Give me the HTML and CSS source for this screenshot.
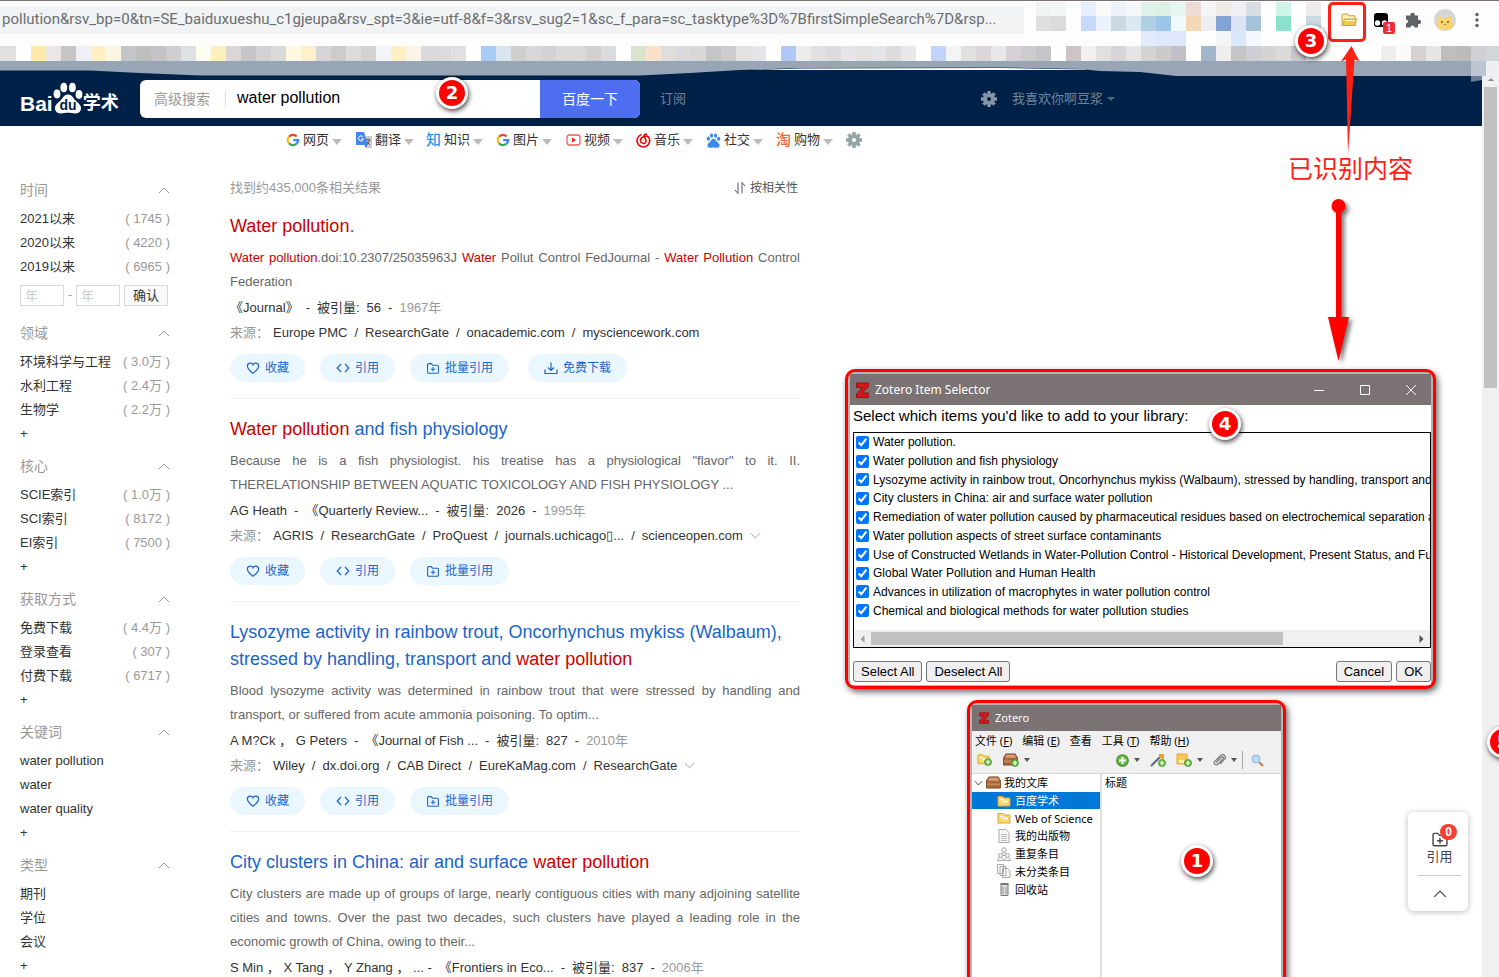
FILE: index.html
```html
<!DOCTYPE html>
<html lang="zh-CN">
<head>
<meta charset="utf-8">
<title>water pollution - 百度学术</title>
<link rel="stylesheet" href="styles.css">
</head>
<body>
<svg class="defs" aria-hidden="true">
  <defs>
    <symbol id="gear" viewBox="0 0 16 16"><circle cx="8" cy="8" r="4" fill="none" stroke="currentColor" stroke-width="4"/><path d="M8 0v4M8 12v4M0 8h4M12 8h4M2.4 2.4l2.8 2.8M10.8 10.8l2.8 2.8M13.6 2.4l-2.8 2.8M5.2 10.8l-2.8 2.8" stroke="currentColor" stroke-width="3.4" fill="none"/></symbol>
    <symbol id="up" viewBox="0 0 12 7"><path d="M1 6l5-5 5 5" fill="none" stroke="currentColor"/></symbol>
    <symbol id="down" viewBox="0 0 12 7"><path d="M1 1l5 5 5-5" fill="none" stroke="currentColor"/></symbol>
    <symbol id="heart" viewBox="0 0 14 14"><path d="M7 12.2C4 9.9 1.4 7.6 1.4 4.9a2.9 2.9 0 0 1 5.6-1 2.9 2.9 0 0 1 5.6 1C12.600 7.600 10 9.900 7 12.200z" fill="none" stroke="currentColor" stroke-width="1.200"/></symbol>
    <symbol id="code" viewBox="0 0 14 14"><path d="M5 3L1.200 7 5 11M9 3l3.800 4L9 11" fill="none" stroke="currentColor" stroke-width="1.200"/></symbol>
    <symbol id="folderplus" viewBox="0 0 14 14"><path d="M2.600 2.600h2.600l1.400 1.600h4.800a1 1 0 0 1 1 1v6a1 1 0 0 1-1 1H2.600a1 1 0 0 1-1-1V3.600a1 1 0 0 1 1-1zM7 6v4.600M4.700 8.300h4.600" fill="none" stroke="currentColor" stroke-width="1.100"/></symbol>
    <symbol id="download" viewBox="0 0 14 14"><path d="M7 1.500v7.500M4 6.500l3 3 3-3M1 8.500v4h12v-4" fill="none" stroke="currentColor" stroke-width="1.200"/></symbol>
    <symbol id="google" viewBox="0 0 14 14"><g fill="none" stroke-width="2.200"><path d="M3 3.700A5 5 0 0 1 10.600 3.400" stroke="#ea4335"/><path d="M3 10.300a5 5 0 0 1 0-6.600" stroke="#fbbc05"/><path d="M10.300 10.800A5 5 0 0 1 3 10.300" stroke="#34a853"/><path d="M7.200 7.200h5a5 5 0 0 1-1.900 3.600" stroke="#4285f4"/></g></symbol>
    <symbol id="paw" viewBox="0 0 30 32"><ellipse cx="4" cy="12" rx="3.400" ry="4.400"/><ellipse cx="10.800" cy="5.500" rx="3.400" ry="4.700"/><ellipse cx="19.400" cy="5.500" rx="3.400" ry="4.700"/><ellipse cx="26" cy="12.500" rx="3.400" ry="4.400"/><path d="M15 12.500c-4 0-5 3.500-7.500 6S1.500 23 2 27c.5 3 3 4.500 6 4.500 2.500 0 4-.7 7-.7s4.500.7 7 .7c3 0 5.500-1.500 6-4.500.500-4-3-6-5.500-8.500s-3.500-6-7.500-6z"/></symbol>
    <symbol id="folder" viewBox="0 0 16 14"><path d="M1 12.500V2.200L2 1h4.500l1 1.800H14v9.700z" fill="#fff3c0" stroke="#c89a2e"/><path d="M1.500 12.500L3.500 6h12l-1.300 6.500z" fill="#f0c84a" stroke="#d3a437"/><path d="M4 7.500h10" stroke="#fff6cf"/></symbol>
    <symbol id="folder2" viewBox="0 0 14 12"><path d="M1 11V1.500h5l1 1.500h6v8z" fill="#f9d873" stroke="#dba63a"/><path d="M3 4.500h4M6 6.500h5" stroke="#fff" stroke-width="1.500"/></symbol>
    <symbol id="box" viewBox="0 0 16 14"><path d="M3 1h10l2.500 4v8h-15V5z" fill="#a9663a" stroke="#7e4422"/><path d="M3.500 2h9l1.500 3H2z" fill="#d6a077"/><path d="M1 9h14" stroke="#c98957" stroke-width="2"/></symbol>
    <symbol id="plus" viewBox="0 0 10 10"><circle cx="5" cy="5" r="4.400" fill="#6bbb48" stroke="#4a8f30"/><path d="M5 2.300v5.400M2.300 5h5.400" stroke="#fff" stroke-width="1.500"/></symbol>
    <symbol id="z" viewBox="0 0 13 16"><path d="M.5 1h12v3.500L6.500 11h6v4.500H.5V12l6-6.500h-6z" fill="#d5161b" stroke="#9b1014"/></symbol>
  </defs>
</svg>

<header class="chrome">
  <svg class="mosaic" id="mosaic" aria-hidden="true"></svg>
  <div class="toolbar">
    <div class="url">pollution&amp;rsv_bp=0&amp;tn=SE_baiduxueshu_c1gjeupa&amp;rsv_spt=3&amp;ie=utf-8&amp;f=3&amp;rsv_sug2=1&amp;sc_f_para=sc_tasktype%3D%7BfirstSimpleSearch%7D&amp;rsp...</div>
    <div class="extensions">
      <button aria-label="Zotero Connector"><svg width="16" height="14"><use href="#folder"/></svg></button>
      <button class="monkey" aria-label="Tampermonkey"><svg width="16" height="16" viewBox="0 0 16 16"><rect x="1" y="1" width="14" height="14" rx="3"/><circle cx="4.500" cy="11" r="2.700" fill="#fff"/><circle cx="11.500" cy="11" r="2.700" fill="#fff"/></svg><span>1</span></button>
      <button aria-label="扩展程序"><svg width="16" height="16" viewBox="0 0 16 16" fill="#5f6368"><path d="M1 3.500h4.500a2.200 2.200 0 1 1 4.200 0H13V8a2.200 2.200 0 1 1 0 4v3.500H9.500a2 2 0 1 0-4 0H1v-4a2 2 0 1 0 0-4z"/></svg></button>
      <button aria-label="用户"><svg width="22" height="22" viewBox="0 0 22 22"><circle cx="11" cy="11" r="11" fill="#d6d6d6"/><path d="M4.500 6l3.500 3h6l3.500-3 .5 7c1.500 2 1 4 0 5.500-3 3-11 3-14 0-1-1.500-1.500-3.500 0-5.500z" fill="#fbd667"/><circle cx="8" cy="13" r="1" fill="#754"/><circle cx="14" cy="13" r="1" fill="#754"/><path d="M10 15.500h2" stroke="#a65"/></svg></button>
      <button aria-label="菜单"><svg width="4" height="16" viewBox="0 0 4 16" fill="#5f6368"><circle cx="2" cy="2.500" r="1.700"/><circle cx="2" cy="8" r="1.700"/><circle cx="2" cy="13.500" r="1.700"/></svg></button>
    </div>
  </div>
</header>

<div class="viewport">
  <div class="page">
    <div class="masthead">
      <a class="logo" href="#" aria-label="百度学术"><span class="latin">Bai</span><svg width="30" height="32"><use href="#paw" fill="#fff"/><text x="15" y="28" text-anchor="middle">du</text></svg><span class="han">学术</span></a>
      <form class="search">
        <button type="button" class="advanced">高级搜索</button>
        <input type="text" value="water pollution" aria-label="搜索">
        <button type="button" class="go">百度一下</button>
      </form>
      <a class="subscribe" href="#">订阅</a>
      <a class="user" href="#"><svg width="16" height="16"><use href="#gear"/></svg><span>我喜欢你啊豆浆</span><i class="caret"></i></a>
    </div>

    <nav class="engines">
      <a href="#"><svg width="14" height="14"><use href="#google"/></svg>网页<i class="caret"></i></a>
      <a href="#"><svg width="16" height="16" viewBox="0 0 16 16"><path d="M7 4h9v12H9z" fill="#ccc"/><path d="M9.500 8h5M12 6.500V8M10 13c2-1 3-3 3.500-5M10.500 9.500l3.500 3.500" stroke="#555" fill="none"/><path d="M0 0h8l4 13H0z" fill="#4587e8"/><path d="M9 13h2l-1 3z" fill="#2a56c6"/><path d="M7 4.800A2.500 2.500 0 1 0 7.500 7H5" stroke="#fff" fill="none"/></svg>翻译<i class="caret"></i></a>
      <a href="#"><b class="zhi">知</b>知识<i class="caret"></i></a>
      <a href="#"><svg width="14" height="14"><use href="#google"/></svg>图片<i class="caret"></i></a>
      <a href="#"><svg width="15" height="14" viewBox="0 0 15 14"><rect x="1" y="2" width="13" height="10" rx="2.500" fill="none" stroke="#f25a5a" stroke-width="1.300"/><path d="M6 4.600v4.800L10 7z" fill="#f22"/></svg>视频<i class="caret"></i></a>
      <a href="#"><svg width="15" height="15" viewBox="0 0 15 15"><path d="M5.500 1.600A6.300 6.300 0 1 0 12.500 4C11.300 3 9.500 3 8 3.500 5.500 4.200 4.300 6 4.500 8c.3 2.500 4 3.300 5.200 1.300C10.700 7 9 5.700 8.300 3.500 7.600 1.500 9.500.5 11 1.600" fill="none" stroke="#f00808" stroke-width="1.600"/></svg>音乐<i class="caret"></i></a>
      <a href="#"><svg width="15" height="15"><use href="#paw" fill="#3c8cf0"/></svg>社交<i class="caret"></i></a>
      <a href="#"><b class="tao">淘</b>购物<i class="caret"></i></a>
      <a href="#" class="settings" aria-label="设置"><svg width="16" height="16"><use href="#gear"/></svg></a>
    </nav>

    <main class="columns">
      <aside class="filters">
        <section>
          <h2>时间<svg><use href="#up"/></svg></h2>
          <a href="#">2021以来<span>( 1745 )</span></a>
          <a href="#">2020以来<span>( 4220 )</span></a>
          <a href="#">2019以来<span>( 6965 )</span></a>
          <form class="years"><input type="text" placeholder="年" aria-label="起始年"><span>-</span><input type="text" placeholder="年" aria-label="结束年"><button type="button">确认</button></form>
        </section>
        <section>
          <h2>领域<svg><use href="#up"/></svg></h2>
          <a href="#">环境科学与工程<span>( 3.0万 )</span></a>
          <a href="#">水利工程<span>( 2.4万 )</span></a>
          <a href="#">生物学<span>( 2.2万 )</span></a>
          <a href="#">+</a>
        </section>
        <section>
          <h2>核心<svg><use href="#up"/></svg></h2>
          <a href="#">SCIE索引<span>( 1.0万 )</span></a>
          <a href="#">SCI索引<span>( 8172 )</span></a>
          <a href="#">EI索引<span>( 7500 )</span></a>
          <a href="#">+</a>
        </section>
        <section>
          <h2>获取方式<svg><use href="#up"/></svg></h2>
          <a href="#">免费下载<span>( 4.4万 )</span></a>
          <a href="#">登录查看<span>( 307 )</span></a>
          <a href="#">付费下载<span>( 6717 )</span></a>
          <a href="#">+</a>
        </section>
        <section>
          <h2>关键词<svg><use href="#up"/></svg></h2>
          <a href="#">water pollution</a>
          <a href="#">water</a>
          <a href="#">water quality</a>
          <a href="#">+</a>
        </section>
        <section>
          <h2>类型<svg><use href="#up"/></svg></h2>
          <a href="#">期刊</a>
          <a href="#">学位</a>
          <a href="#">会议</a>
          <a href="#">+</a>
        </section>
      </aside>

      <div class="results">
        <div class="summary"><span>找到约435,000条相关结果</span><button><svg width="12" height="12" viewBox="0 0 12 12"><path d="M4 .5v11L1 8M8 11.500V.5L11 4" fill="none" stroke="currentColor"/></svg>按相关性</button></div>

        <article>
          <h3><a href="#"><em>Water pollution</em>.</a></h3>
          <p class="abstract"><em>Water pollution</em>.doi:10.2307/25035963J <em>Water</em> Pollut Control FedJournal - <em>Water Pollution</em> Control Federation</p>
          <div class="meta"><a href="#">《Journal》</a><span>-</span><span>被引量:</span><a href="#">56</a><span>-</span><time>1967年</time></div>
          <div class="sources"><span>来源：</span><div class="meta"><a href="#">Europe PMC</a><span>/</span><a href="#">ResearchGate</a><span>/</span><a href="#">onacademic.com</a><span>/</span><a href="#">mysciencework.com</a></div></div>
          <div class="actions"><button><svg><use href="#heart"/></svg>收藏</button><button><svg><use href="#code"/></svg>引用</button><button><svg><use href="#folderplus"/></svg>批量引用</button><button class="free"><svg><use href="#download"/></svg>免费下载</button></div>
        </article>

        <article>
          <h3><a href="#"><em>Water pollution</em> and fish physiology</a></h3>
          <p class="abstract">Because he is a fish physiologist. his treatise has a physiological "flavor" to it. II. THERELATIONSHIP BETWEEN AQUATIC TOXICOLOGY AND FISH PHYSIOLOGY ...</p>
          <div class="meta"><a href="#">AG Heath</a><span>-</span><a href="#">《Quarterly Review...</a><span>-</span><span>被引量:</span><a href="#">2026</a><span>-</span><time>1995年</time></div>
          <div class="sources"><span>来源：</span><div class="meta"><a href="#">AGRIS</a><span>/</span><a href="#">ResearchGate</a><span>/</span><a href="#">ProQuest</a><span>/</span><a href="#">journals.uchicago▯...</a><span>/</span><a href="#">scienceopen.com</a><svg><use href="#down"/></svg></div></div>
          <div class="actions"><button><svg><use href="#heart"/></svg>收藏</button><button><svg><use href="#code"/></svg>引用</button><button><svg><use href="#folderplus"/></svg>批量引用</button></div>
        </article>

        <article>
          <h3><a href="#">Lysozyme activity in rainbow trout, Oncorhynchus mykiss (Walbaum), stressed by handling, transport and <em>water pollution</em></a></h3>
          <p class="abstract">Blood lysozyme activity was determined in rainbow trout that were stressed by handling and transport, or suffered from acute ammonia poisoning. To optim...</p>
          <div class="meta"><a href="#">A M?Ck ，&nbsp;G Peters</a><span>-</span><a href="#">《Journal of Fish ...</a><span>-</span><span>被引量:</span><a href="#">827</a><span>-</span><time>2010年</time></div>
          <div class="sources"><span>来源：</span><div class="meta"><a href="#">Wiley</a><span>/</span><a href="#">dx.doi.org</a><span>/</span><a href="#">CAB Direct</a><span>/</span><a href="#">EureKaMag.com</a><span>/</span><a href="#">ResearchGate</a><svg><use href="#down"/></svg></div></div>
          <div class="actions"><button><svg><use href="#heart"/></svg>收藏</button><button><svg><use href="#code"/></svg>引用</button><button><svg><use href="#folderplus"/></svg>批量引用</button></div>
        </article>

        <article>
          <h3><a href="#">City clusters in China: air and surface <em>water pollution</em></a></h3>
          <p class="abstract">City clusters are made up of groups of large, nearly contiguous cities with many adjoining satellite cities and towns. Over the past two decades, such clusters have played a leading role in the economic growth of China, owing to their...</p>
          <div class="meta"><a href="#">S Min ，&nbsp;X Tang ，&nbsp;Y Zhang ，&nbsp;... -</a><a href="#">《Frontiers in Eco...</a><span>-</span><span>被引量:</span><a href="#">837</a><span>-</span><time>2006年</time></div>
        </article>
      </div>
    </main>
  </div>
  <div class="scrollbar"><i></i><b></b></div>
</div>

<svg class="smear" width="1499" height="90" aria-hidden="true">
  <path d="M0 61H1486V76H1176L1140 72 1100 71 1080 69 1000 67.500 800 68 740 70 690 73 640 75.500H200L140 73 90 70.500H0z" fill="#98a5b5"/>
  <path d="M750 70L800 68.500 1000 68 1085 69.500 1086 70z" fill="#fff"/>
  <path d="M1471 46h28v31l-28 5z" fill="#e8eef4" opacity=".45"/>
</svg>

<div class="citebox">
  <button><svg width="20" height="18"><use href="#folderplus"/></svg><span>引用</span><b>0</b></button>
  <button aria-label="返回顶部"><svg width="14" height="8"><use href="#up"/></svg></button>
</div>

<section class="window selector">
  <div class="titlebar"><svg width="13" height="16"><use href="#z"/></svg><span>Zotero Item Selector</span>
    <div class="controls"><button aria-label="最小化"><svg viewBox="0 0 12 12"><path d="M1 6.500h10"/></svg></button><button aria-label="最大化"><svg viewBox="0 0 12 12"><path d="M1.500 1.500h9v9h-9z"/></svg></button><button aria-label="关闭"><svg viewBox="0 0 12 12"><path d="M1 1l10 10M11 1L1 11"/></svg></button></div>
  </div>
  <div class="dialog">
    <p>Select which items you'd like to add to your library:</p>
    <div class="listbox">
      <div class="items">
        <label><input type="checkbox" checked>Water pollution.</label>
        <label><input type="checkbox" checked>Water pollution and fish physiology</label>
        <label><input type="checkbox" checked>Lysozyme activity in rainbow trout, Oncorhynchus mykiss (Walbaum), stressed by handling, transport and</label>
        <label><input type="checkbox" checked>City clusters in China: air and surface water pollution</label>
        <label><input type="checkbox" checked>Remediation of water pollution caused by pharmaceutical residues based on electrochemical separation a</label>
        <label><input type="checkbox" checked>Water pollution aspects of street surface contaminants</label>
        <label><input type="checkbox" checked>Use of Constructed Wetlands in Water-Pollution Control - Historical Development, Present Status, and Fu</label>
        <label><input type="checkbox" checked>Global Water Pollution and Human Health</label>
        <label><input type="checkbox" checked>Advances in utilization of macrophytes in water pollution control</label>
        <label><input type="checkbox" checked>Chemical and biological methods for water pollution studies</label>
      </div>
      <div class="hscroll"><svg viewBox="0 0 4 8"><path d="M4 0v8L0 4z" fill="#a3a3a3"/></svg><div><i></i></div><svg viewBox="0 0 4 8"><path d="M0 0v8l4-4z" fill="#505050"/></svg></div>
    </div>
    <div class="dialog-buttons"><button>Select All</button><button>Deselect All</button><button class="cancel">Cancel</button><button>OK</button></div>
  </div>
</section>

<section class="window library">
  <div class="titlebar"><svg width="10" height="12"><use href="#z"/></svg><span>Zotero</span></div>
  <div class="menus"><button>文件 (<u>F</u>)</button><button>编辑 (<u>E</u>)</button><button>查看</button><button>工具 (<u>T</u>)</button><button>帮助 (<u>H</u>)</button></div>
  <div class="tools">
    <button aria-label="新建分类"><svg width="16" height="14" viewBox="0 0 16 14"><use href="#folder2" width="13" height="12"/><use href="#plus" x="7" y="5" width="8" height="8"/></svg></button>
    <button aria-label="新建文库"><svg width="16" height="14" viewBox="0 0 16 14"><use href="#box" width="15" height="13"/><use href="#plus" x="8" y="6" width="8" height="8"/></svg><i class="caret"></i></button>
    <button class="first-item" aria-label="新建条目"><svg width="13" height="13"><use href="#plus"/></svg><i class="caret"></i></button>
    <button aria-label="添加条目"><svg width="16" height="14" viewBox="0 0 16 14"><path d="M1 13L10 4" stroke="#567" stroke-width="2"/><path d="M9 2h4v4M10 5l3-3" stroke="#f0a020" stroke-width="2" fill="none"/><use href="#plus" x="8" y="6" width="8" height="8"/></svg></button>
    <button aria-label="新建笔记"><svg width="16" height="14" viewBox="0 0 16 14"><path d="M1 1h10v10H1z" fill="#fbc94f" stroke="#e0a83c"/><path d="M3 7h5v3H3z" fill="#fff0b8"/><use href="#plus" x="8" y="6" width="8" height="8"/></svg><i class="caret"></i></button>
    <button aria-label="添加附件"><svg width="13" height="13" viewBox="0 0 13 13"><path d="M3 8.500L8.500 3a1 1 0 0 1 1.700 1.600L5 10a2 2 0 0 1-3.300-2.700L7.700 1.500a2.700 2.700 0 0 1 4 3.700L7 10" fill="none" stroke="#777" stroke-width="1.200"/></svg><i class="caret"></i></button>
    <button class="lookup" aria-label="搜索"><svg width="13" height="13" viewBox="0 0 13 13"><path d="M8 8l4 4" stroke="#c98a45" stroke-width="2.400"/><circle cx="5" cy="5" r="4" fill="#b9dcfa" stroke="#8fb4dd"/></svg></button>
  </div>
  <div class="panes">
    <ul class="tree">
      <li class="root"><svg class="twist"><use href="#down"/></svg><svg width="15" height="13"><use href="#box"/></svg>我的文库</li>
      <li class="selected"><svg width="14" height="12"><use href="#folder2"/></svg>百度学术</li>
      <li><svg width="14" height="12"><use href="#folder2"/></svg>Web of Science</li>
      <li><svg width="14" height="14" viewBox="0 0 14 14"><path d="M2 .5h7l3 3v10H2z" fill="#f8f8f8" stroke="#aaa"/><path d="M4 5.500h6M4 7.500h6M4 9.500h6M4 11.500h6" stroke="#bbb"/></svg>我的出版物</li>
      <li><svg width="14" height="14" viewBox="0 0 14 14" fill="#f4f4f4" stroke="#aaa"><path d="M4.500 8.500c0-4 5-4 5 0z"/><circle cx="7" cy="3" r="2.300"/><path d="M.5 13.500c0-4 6-4 6 0zM7.500 13.500c0-4 6-4 6 0z"/><circle cx="3.500" cy="8.500" r="2"/><circle cx="10.500" cy="8.500" r="2"/></svg>重复条目</li>
      <li><svg width="14" height="14" viewBox="0 0 14 14" fill="#f8f8f8" stroke="#aaa"><path d="M.5 .5h6v9h-6zM3 2.500h6v9H3zM5.500 4.500h5l2.500 2.500v6.500H5.500z"/></svg>未分类条目</li>
      <li><svg width="14" height="14" viewBox="0 0 14 14"><path d="M4 2.500h7v11H4z" fill="#ddd" stroke="#777"/><path d="M3.500 2h8" stroke="#777" stroke-width="2"/><path d="M6 5v7M9 5v7" stroke="#999"/></svg>回收站</li>
    </ul>
    <div class="list">标题</div>
  </div>
</section>

<div class="highlight"></div>
<svg class="arrows" width="90" height="380" viewBox="1310 0 90 380" aria-hidden="true">
  <path d="M1351.500 46l8 15.500-5-2-6.500 95-2-95-5 2z" fill="#ff2015"/>
  <g fill="#f00"><circle cx="1338.500" cy="206" r="7"/><path d="M1336 208h5.500v109h7.500L1338.500 361 1328 317h8z"/></g>
</svg>
<p class="note">已识别内容</p>
<b class="pin p1">1</b><b class="pin p2">2</b><b class="pin p3">3</b><b class="pin p4">4</b><b class="pin p5">5</b>
<script src="script.js"></script>
</body>
</html>
```
FILE: styles.css
```css
* { box-sizing: border-box; }
body {
  margin: 0;
  height: 100vh;
  position: relative;
  overflow: hidden;
  display: flex;
  flex-direction: column;
  background: #fff;
  color: #333;
  font: 13px/24px "Liberation Sans", "Noto Sans CJK SC", sans-serif;
}
button, input { font: inherit; color: inherit; }
button { border: 0; background: none; padding: 0; }
a { color: inherit; text-decoration: none; }
em { color: #c00; font-style: normal; }
h2, h3, p, ul { margin: 0; padding: 0; font-weight: 400; }
svg { flex: none; }
.defs { position: absolute; width: 0; height: 0; }
.caret { flex: none; border: 5px solid transparent; border-top: 6px solid #bbb; border-bottom: 0; }

/* browser toolbar */
.chrome { position: relative; flex: none; height: 61px; background: #fdfdfd; border-top: 1px solid #7b7373; }
.mosaic { position: absolute; left: 0; top: -1px; width: 100%; height: 61px; }
.toolbar { position: relative; display: flex; justify-content: space-between; align-items: center; height: 37px; padding-right: 10px; }
.url {
  width: 1024px; height: 28px; padding-left: 2px; overflow: hidden; white-space: nowrap;
  background: #f1f3f4; color: #6a6d71; font: 15px/27px Roboto, "Noto Sans", sans-serif;
}
.extensions { display: flex; gap: 8px; }
.extensions button { position: relative; display: flex; align-items: center; justify-content: center; width: 24px; height: 24px; }
.monkey span {
  position: absolute; right: -2px; bottom: -2px; width: 12px; height: 12px; border-radius: 2px;
  background: #e92d30; color: #fff; font-size: 11px; line-height: 12px;
}

/* page and its scrollbar */
.viewport { flex: 1; min-height: 0; display: flex; }
.page { flex: 1; min-width: 0; overflow: hidden; }
.scrollbar { width: 17px; padding: 17px 2px 0; background: #f0f0f0; }
.scrollbar i { display: block; width: 6px; margin: 0 auto 6px; border: 3px solid transparent; border-top: 0; border-bottom-color: #888; }
.scrollbar b { display: block; height: 301px; background: #c1c1c1; }

.masthead { display: flex; align-items: center; padding: 19px 367px 8px 20px; background: #002147; }
.logo { display: flex; align-items: flex-end; width: 100px; height: 38px; padding-bottom: 4px; color: #fff; font-weight: 700; }
.logo .latin { font-size: 21px; line-height: 20px; }
.logo .han { font-size: 18px; line-height: 22px; }
.logo text { fill: #002147; font-size: 14px; font-weight: 700; }
.search { display: flex; width: 500px; height: 38px; margin: 0 20px; border-radius: 6px; overflow: hidden; background: #fff; }
.search .advanced { align-self: center; padding: 0 15px 0 14px; border-right: 1px solid #ddd; color: #999; font-size: 14px; line-height: 16px; }
.search input { flex: 1; min-width: 0; border: 0; padding: 0 11px 2px; outline: 0; color: #000; font-size: 16px; }
.search .go { width: 100px; background: #4e6ef2; color: #fff; font-size: 14px; }
.subscribe, .user { color: #72839a; }
.user { display: flex; align-items: center; gap: 15px; margin-left: auto; }
.user svg { color: #8795a6; }
.user .caret { margin-left: -11px; border-width: 4px 4px 0; border-top-color: #52667e; }

.engines { display: grid; grid-template-columns: repeat(9, 70px); padding: 2px 0 3px 286px; color: #333; }
.engines a { display: flex; align-items: center; gap: 3px; }
.engines b { font-size: 15px; font-weight: 500; }
.engines .caret { margin-top: 3px; }
.zhi { color: #2b94ea; }
.tao { color: #f0653a; }
.engines .settings { color: #93a5a5; }

.columns { display: grid; grid-template-columns: 150px 570px; gap: 60px; padding: 21px 20px 0; }
.filters section { margin-bottom: 8px; }
.filters section:first-child { margin-bottom: 15px; }
.filters h2 { display: flex; align-items: center; justify-content: space-between; margin: 2px 0 5px; color: #999; font-size: 14px; line-height: 24px; }
.filters section + section h2 { margin-top: 0; }
.filters h2 svg { width: 12px; height: 7px; }
.filters a { display: flex; justify-content: space-between; }
.filters a span { color: #999; }
.years { display: flex; gap: 4px; height: 21px; margin-top: 6px; line-height: 19px; }
.years input { width: 44px; padding: 0 4px; border: 1px solid #d9d9d9; }
.years input::placeholder { color: #ccc; }
.years button { width: 44px; border: 1px solid #d9d9d9; background: #fafafa; }
.years span { width: 4px; color: #999; }

.summary { display: flex; justify-content: space-between; margin-bottom: 13px; padding-right: 2px; color: #999; }
.summary button { display: flex; align-items: center; gap: 4px; color: #555; font-size: 12px; }
article { padding-bottom: 16px; margin-bottom: 17px; border-bottom: 1px solid #eee; }
h3 { color: #1a64c8; font-size: 18px; line-height: 27px; }
.abstract { margin: 6px 0 1px; color: #666; text-align: justify; }
.meta { display: flex; align-items: center; gap: 7px; line-height: 25px; white-space: nowrap; }
.meta svg { width: 11px; height: 7px; color: #999; }
.meta time { color: #999; }
.sources { display: flex; gap: 4px; line-height: 25px; }
.sources > span { color: #999; }
.actions { display: flex; gap: 15px; margin-top: 9px; }
.actions button { display: flex; align-items: center; gap: 5px; height: 28px; padding: 0 16px; border-radius: 14px; background: #ebf7fe; color: #1a66cc; font-size: 12px; }
.actions svg { width: 14px; height: 14px; }
.actions .free { margin-left: 4px; }

/* overlays on the page */
.smear { position: absolute; left: 0; top: 0; }
.citebox {
  position: absolute; right: 31px; top: 812px; width: 60px; padding: 0 7px 0 10px;
  display: flex; flex-direction: column; border-radius: 6px; background: #fff; box-shadow: 0 1px 6px #0004;
}
.citebox button { position: relative; display: flex; flex-direction: column; align-items: center; justify-content: center; height: 35px; color: #444; line-height: 18px; }
.citebox button:first-child { height: 64px; padding-top: 8px; border-bottom: 1px solid #ccc; }
.citebox b { position: absolute; right: 4px; top: 12px; width: 17px; height: 16px; border-radius: 8px; background: #f43f35; color: #fff; font-size: 12px; line-height: 16px; }

.window {
  position: absolute; display: flex; flex-direction: column; overflow: hidden; padding: 2px 2px 0;
  border: 3px solid #f00; border-radius: 10px; background: #b5b2b2; box-shadow: 2px 3px 6px #0009;
}
.titlebar { display: flex; align-items: center; background: #7b7373; color: #fff; font-family: "Noto Sans", sans-serif; font-size: 12px; }
.selector { left: 845px; top: 369px; width: 591px; padding-bottom: 1px; }
.selector .titlebar { height: 31px; padding: 0 14px 0 6px; gap: 6px; }
.controls { display: flex; gap: 34px; margin-left: auto; }
.controls button { display: flex; }
.controls svg { width: 12px; height: 12px; fill: none; stroke: #fff; }
.dialog { padding: 0 0 3px 3px; background: #fff; color: #000; }
.dialog p { font-size: 15px; line-height: 22px; }
.listbox { margin-top: 5px; border: 1px solid #000; overflow: hidden; }
.items { display: grid; grid-auto-rows: 1fr; height: 187px; font-size: 12px; line-height: 18px; white-space: nowrap; }
.items label { display: flex; align-items: center; gap: 4px; }
.items input { flex: none; width: 13px; height: 13px; margin: 0 0 0 2px; }
.hscroll { display: flex; align-items: center; height: 17px; margin-top: 10px; background: #f0f0f0; }
.hscroll svg { width: 17px; height: 8px; }
.hscroll div { flex: 1; }
.hscroll i { display: block; width: 76%; height: 13px; background: #c1c1c1; }
.dialog-buttons { display: flex; gap: 4px; margin-top: 13px; }
.dialog-buttons button { height: 21px; padding: 0 7px; border: 1px solid #767676; border-radius: 3px; background: #efefef; line-height: 19px; }
.dialog-buttons .cancel { margin-left: auto; }

.library { left: 967px; top: 700px; bottom: -20px; width: 319px; color: #000; font: 11px/18px "Noto Sans", "Noto Sans CJK SC", sans-serif; }
.library .titlebar { height: 26px; padding-left: 7px; gap: 6px; font-size: 11px; }
.menus { display: flex; gap: 10px; height: 19px; padding-left: 3px; background: #f0f0f0; line-height: 17px; }
.tools { display: flex; align-items: center; gap: 10px; height: 24px; padding: 0 17px 3px 5px; border-bottom: 1px solid #d5d5d5; background: #f0f0f0; }
.tools button { display: flex; align-items: center; gap: 5px; }
.tools .caret { border-width: 4px 3px 0; border-top-color: #555; }
.tools .first-item { margin-left: auto; }
.tools .lookup { margin-left: -5px; padding-left: 8px; border-left: 1px solid #aaa; height: 18px; }
.panes { flex: 1; display: flex; background: #fff; line-height: 17px; }
.tree { display: grid; grid-auto-rows: 1fr; width: 128px; height: 124px; list-style: none; }
.tree li { display: flex; align-items: center; gap: 4px; padding-left: 25px; white-space: nowrap; }
.tree .root { gap: 3px; padding-left: 2px; }
.tree .twist { width: 9px; height: 6px; }
.tree .selected { background: #0078d7; color: #fff; }
.list { flex: 1; padding-left: 3px; border-left: 2px solid #e0e0e0; }

.highlight { position: absolute; left: 1328px; top: 2px; width: 38px; height: 40px; border: 3px solid #ff2015; border-radius: 5px; }
.arrows { position: absolute; left: 1310px; top: 0; }
.arrows g { filter: drop-shadow(3px 3px 2px #0008); }
.note { position: absolute; left: 1288px; top: 151px; color: #ff2015; font-size: 25px; line-height: 36px; }
.pin {
  position: absolute; width: 32px; height: 32px; border: 3px solid #fff; border-radius: 16px;
  background: #f00; color: #fff; box-shadow: 1px 2px 5px #000b;
  font: 700 18px/26px "DejaVu Sans", sans-serif; text-align: center;
}
.p1 { left: 1181px; top: 845px; }
.p2 { left: 436px; top: 77px; }
.p3 { left: 1295px; top: 25px; }
.p4 { left: 1209px; top: 408px; }
.p5 { left: 1487px; top: 726px; }
```
FILE: script.js
```js
// Pixelated strips of the toolbar: [x of first tile, y, tile height, colours]
const strips = [
  [-14, 46, 15, "e0e0e0 e0e0e0 ffffff fde9a9 ebe6e6 c5c5c5 f0f1f5 fff0c3 faf6e4 c3c5c9 bdbfbe c5c3c5 cfcfd2 dee1e4 fdfdf0 fdf0c0 dad6d6 c5c6ca d2d2d4 d8dbda fff8e3 fff0cc d7d5d7 cdccca dcdcdc d2d3d0 f4f5f9 fff0c4 faf5e6 dadada dcdadc e0e0e2 ffffff a9ccf6 dae5f0 cfcfcd d8d8da d4d2d5 dbd9d9 d9d9d9 d2d0ce dadbdd fdfdfd dae3ce fbe0cc e0dedd dadade d9d8d6 c3c5c6 cdcdcf e2e2e2 e4e5e9 fdfdfd b1c8f6 ececec e0e1e3 dedbde e8e5ea e2e2e0 e3e5e8 dcdcdc e8e8ea ffffff c1d3f9 f4f4f4 e0e0e0 dad6da e8e8ea d5d1d6 cbcccb c5c5c9 ffffff cdc5c5 f2f0f0 e0e0e0 d8d5d8 e5e4e6 d4d4d4 cbcbcc c0c0c6 ffffff a1b6ca f0eeec c4c5c6 cecfd4 d4d4d4 dbdad8 c8c8cc f4f4f4 fbfbfb ffffff ffffff ffffff eeeeee fafafa d5d0d2 e5e5e5 bebebc bdbaba bbb9b9 c0c3c7"],
  [1036, 2, 14, "f1f3f4 f4f6f6 fdfdfd e6edfc fafafa ebf2fa f5f7fa ddf2e8 dcf0e6 e6f5ee ecdcd5 f2f4f6 f0eae7 eef0f4 d8dee2 ffffff cef3e8 ffffff ececec"],
  [1036, 16, 15, "dedfe1 dadbdd fdfdfd c7d9fb ecf2fb cbd7e3 dce9f2 b1cfe3 9bc6e6 f0fbf7 f4d8b5 eceef2 84a2d4 dce3f4 a5c3d9 ffffff 8be1cc ffffff c8dae2"],
  [1141, 31, 15, "e2ebfc dde8fc dde8fc ffffff ffffff f4f5f8 dae7fc f4f8fd"]
];
const svg = document.getElementById("mosaic");
for (const [x, y, h, colours] of strips) {
  colours.split(" ").forEach((c, i) => {
    const r = document.createElementNS("http://www.w3.org/2000/svg", "rect");
    r.setAttribute("x", x + 15 * i);
    r.setAttribute("y", y);
    r.setAttribute("width", 15);
    r.setAttribute("height", h);
    r.setAttribute("fill", "#" + c);
    svg.append(r);
  });
}
```
